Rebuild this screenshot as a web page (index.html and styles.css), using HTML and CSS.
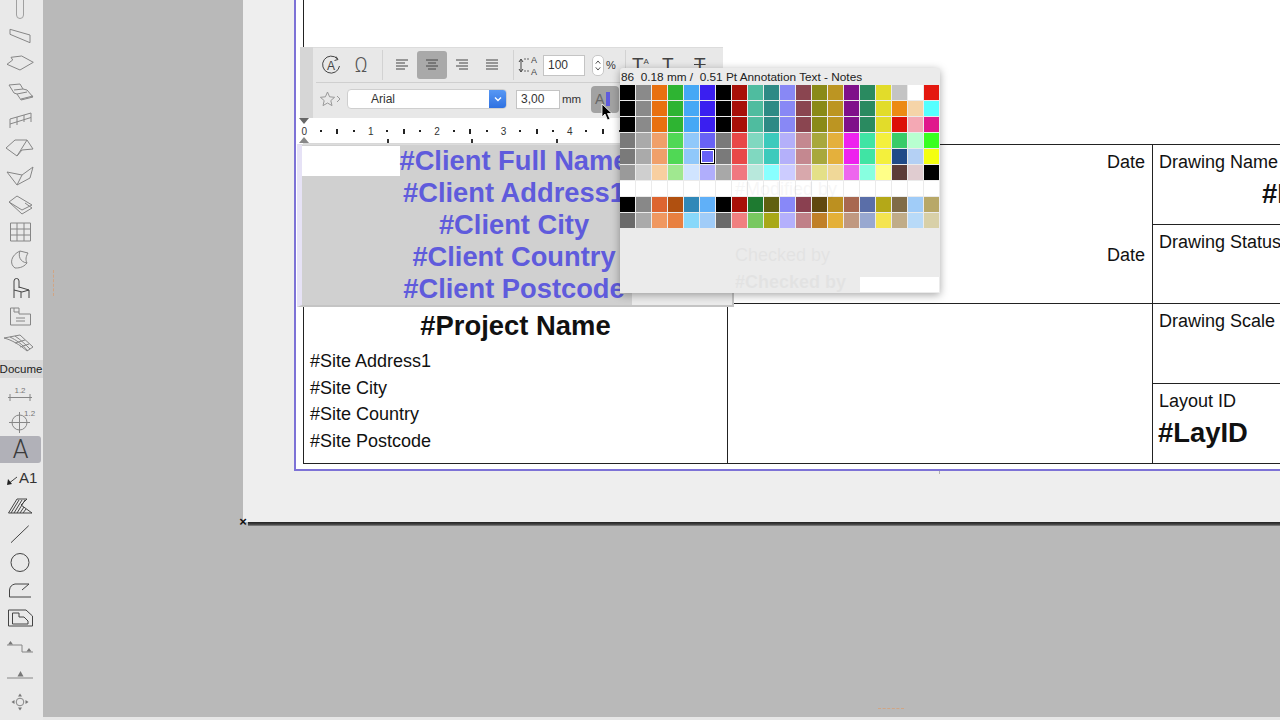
FILE: index.html
```html
<!DOCTYPE html>
<html lang="en">
<head>
<meta charset="utf-8">
<title>Title block editor</title>
<link rel="stylesheet" href="styles.css">
</head>
<body>
<div class="app">
  <aside class="tools">
    <div class="tool-group first">
      <svg class="tool" viewBox="0 0 43 28"><path class="lt" d="M16.5 0V20a3.5 3.5 0 0 0 7 0V0"/></svg>
      <svg class="tool" viewBox="0 0 43 28"><path d="M10 6.3L30 12V19.7L10 11.3Z"/></svg>
      <svg class="tool" viewBox="0 0 43 28"><path d="M7 13.3L12.7 9 11 6.3 21.7 5 33.3 11.3 20 19Z"/></svg>
      <svg class="tool" viewBox="0 0 43 28"><path d="M9 6L20 5 23 10 27 11 33 18 21 21 17 15 14 14ZM14 11L23 10M17 15L27 13M21 20L33 17"/></svg>
      <svg class="tool" viewBox="0 0 43 28"><path d="M10 21V12L31 6V15M10 17L31 10.5M17 10V18M24 8V15"/></svg>
      <svg class="tool" viewBox="0 0 43 28"><path d="M6 13L15 5H27L33 14L22 15L17 21ZM27 5L17 21"/></svg>
      <svg class="tool" viewBox="0 0 43 28"><path d="M7 9L22 12L33 4L30 15L17 22ZM22 12L17 22"/></svg>
      <svg class="tool" viewBox="0 0 43 28"><path d="M9 11L17 5 32 14 22 19ZM9 11L22 23 32 17 25 12"/></svg>
      <svg class="tool" viewBox="0 0 43 28"><path d="M10.5 4H30.5V22H10.5ZM10.5 10H30.5M10.5 16H30.5M17 4V22M24 4V22"/></svg>
      <svg class="tool" viewBox="0 0 43 28"><path d="M15 21C9 17 11 8 20 4L28 6C25 11 26 14 27 16C23 21 18 21 15 21ZM20 4C18 9 20 15 27 16"/></svg>
      <svg class="tool" viewBox="0 0 43 28"><path class="dk" d="M14 23V6a2.5 2.5 0 0 1 5 0V13M14 15L22 17 29 15 19 12M21 17V23M29 15V23"/></svg>
      <svg class="tool" viewBox="0 0 43 28"><path d="M10.5 5H19V11H30.5V22H10.5ZM14 5V9H19M16 15H25M16 18H25"/></svg>
      <svg class="tool" viewBox="0 0 43 28"><path d="M4 7L20 4 33 16 27 20C20 14 12 9 4 7ZM10 6C16 9 22 13 28 20M15 5C21 9 26 14 30 18M25 9L15 12M29 13L20 16"/></svg>
    </div>
    <div class="doc-tab">Docume</div>
    <div class="tool-group">
      <svg class="tool" viewBox="0 0 43 28"><text class="tiny" x="20" y="13" text-anchor="middle">1.2</text><path d="M8 17.5H32M10 14V21M30 14V21"/></svg>
      <svg class="tool" viewBox="0 0 43 28"><circle cx="19.5" cy="14.5" r="7.5"/><path d="M19.5 4V25M9 14.5H30"/><text class="tiny" x="24" y="8">1.2</text></svg>
      <div class="tool-active"><span class="letter-a">A</span></div>
      <svg class="tool" viewBox="0 0 43 28"><path class="dk" d="M17 13L8 20"/><path class="fill-dk" d="M7 21L8 15 12 20Z"/><text class="label-a1" x="19" y="19">A1</text></svg>
      <svg class="tool" viewBox="0 0 43 28"><path class="dk" d="M8.5 21L17 7H27L21 13L32 21ZM11 21L19 8M14 21L22 8M17 21L25 8M20 21L24 15M23 21L26 17"/></svg>
      <svg class="tool" viewBox="0 0 43 28"><path class="dk" d="M11 22.7L28.7 5.7"/></svg>
      <svg class="tool" viewBox="0 0 43 28"><circle class="dk" cx="20" cy="14.5" r="9"/></svg>
      <svg class="tool" viewBox="0 0 43 28"><path class="dk" d="M31 21H9.5V14Q10 9 15 8H29L22 14"/></svg>
      <svg class="tool" viewBox="0 0 43 28"><path class="dk" d="M8.5 6H26L32.5 12V22H8.5ZM12.5 9H19V13H24L28 17V20H12.5Z"/></svg>
      <svg class="tool" viewBox="0 0 43 28"><path d="M7 13H22V20H33"/><path class="fill-md" d="M8 12.5L10.5 9 13 12.5ZM26.5 19.5L29 16 31.5 19.5Z"/></svg>
      <svg class="tool" viewBox="0 0 43 28"><path d="M7 18H33"/><path class="fill-md" d="M17.5 16.5L20.5 11 23.5 16.5Z"/></svg>
      <svg class="tool" viewBox="0 0 43 28"><circle cx="20" cy="14" r="3.8"/><path class="fill-md" d="M18 8.5L20 5.5 22 8.5ZM18 19.5L20 22.5 22 19.5ZM14.5 12L11.5 14 14.5 16ZM25.5 12L28.5 14 25.5 16Z"/></svg>
    </div>
  </aside>

  <main class="canvas">
    <div class="sheet">
      <div class="frame">
        <div class="drawing">
          <div class="blank-top"></div>
          <div class="cell-client"></div>
          <div class="cell-dates">
            <div class="date">Date</div>
            <div class="date date-second">Date</div>
          </div>
          <div class="cell-drawing">
            <div class="sub sub-name">
              <div class="label">Drawing Name</div>
              <div class="value-name">#Layout Name</div>
            </div>
            <div class="sub">
              <div class="label">Drawing Status</div>
            </div>
          </div>
          <div class="cell-project">
            <div class="project-name">#Project Name</div>
            <div class="site-lines">
              <div>#Site Address1</div>
              <div>#Site City</div>
              <div>#Site Country</div>
              <div>#Site Postcode</div>
            </div>
          </div>
          <div class="cell-empty"></div>
          <div class="cell-layout">
            <div class="sub sub-name">
              <div class="label">Drawing Scale</div>
            </div>
            <div class="sub">
              <div class="label">Layout ID</div>
              <div class="layout-id">#LayID</div>
            </div>
          </div>
        </div>
      </div>
      <div class="frame-tick"></div>
    </div>
    <div class="sheet-edge-row">
      <span class="sheet-x">×</span>
      <div class="sheet-edge"></div>
    </div>
  </main>

  <div class="mark-v"></div>
  <div class="mark-h"></div>
  <div class="bottom-strip"></div>

  <div class="editor">
    <div class="client-text">
      <div>#Client Full Name</div>
      <div>#Client Address1</div>
      <div>#Client City</div>
      <div>#Client Country</div>
      <div>#Client Postcode</div>
    </div>
  </div>

  <div class="format-bar">
    <div class="handle"></div>
    <div class="format-body">
      <div class="bar-row row-top">
        <svg class="slot" viewBox="0 0 30 24"><path d="M21.5 6A8.5 8.5 0 1 0 23.5 13"/><path d="M20 3.5L22 6.5 18.5 7.5"/><text class="bar-a" x="11" y="17">A</text></svg>
        <span class="slot omega">Ω</span>
        <span class="divider"></span>
        <svg class="slot" viewBox="0 0 30 24"><path d="M9 7H21M9 10H18M9 13H21M9 16H18"/></svg>
        <span class="slot slot-active"><svg class="slot-in" viewBox="0 0 30 24"><path d="M9 7H21M11 10H19M9 13H21M11 16H19"/></svg></span>
        <svg class="slot" viewBox="0 0 30 24"><path d="M9 7H21M12 10H21M9 13H21M12 16H21"/></svg>
        <svg class="slot" viewBox="0 0 30 24"><path d="M9 7H21M9 10H21M9 13H21M9 16H21"/></svg>
        <span class="divider div-b"></span>
        <svg class="spacing" viewBox="0 0 22 24"><path d="M3 7V18M1 9L3 6 5 9M1 16L3 19 5 16"/><path class="dash" d="M6 6H12M6 18H12"/><text class="bar-small" x="13" y="10">A</text><text class="bar-small" x="13" y="22">A</text></svg>
        <span class="field field-pct">100</span>
        <span class="stepper"><svg viewBox="0 0 11 20"><path d="M3 8L5.5 5 8 8M3 12L5.5 15 8 12"/></svg></span>
        <span class="pct">%</span>
        <span class="divider div-c"></span>
        <span class="t-tool">T<sup>A</sup></span>
        <span class="t-tool t-mid">T<sub>A</sub></span>
        <span class="t-tool t-strike">T</span>
      </div>
      <div class="bar-row row-bottom">
        <svg class="star" viewBox="0 0 22 16"><path class="star-path" d="M7.5 1L9.6 5.8 14.6 6.3 10.8 9.6 12 14.6 7.5 12 3 14.6 4.2 9.6 .4 6.3 5.4 5.8Z"/><path class="star-path" d="M17 5L20 8 17 11"/></svg>
        <div class="font-select"><span class="font-name">Arial</span><span class="select-arrow"><svg viewBox="0 0 10 8"><path d="M2 2.5L5 5.5 8 2.5"/></svg></span></div>
        <span class="field field-size">3,00</span>
        <span class="unit">mm</span>
        <span class="color-btn"><span class="color-a">A</span><span class="color-bar"></span></span>
      </div>
    </div>
    <div class="ruler">
      <span class="mark-top"></span>
      <span class="mark-bottom"></span>
      <div class="ruler-track">
        <span class="r">0</span><span class="r"><b class="dot"></b></span><span class="r"><b class="tick"></b></span><span class="r"><b class="dot"></b></span>
        <span class="r">1</span><span class="r"><b class="dot"></b></span><span class="r"><b class="tick"></b></span><span class="r"><b class="dot"></b></span>
        <span class="r">2</span><span class="r"><b class="dot"></b></span><span class="r"><b class="tick"></b></span><span class="r"><b class="dot"></b></span>
        <span class="r">3</span><span class="r"><b class="dot"></b></span><span class="r"><b class="tick"></b></span><span class="r"><b class="dot"></b></span>
        <span class="r">4</span><span class="r"><b class="dot"></b></span><span class="r"><b class="tick"></b></span><span class="r"><b class="dot"></b></span>
      </div>
      <span class="stop stop-1"></span><span class="stop stop-2"></span><span class="stop stop-3"></span>
    </div>
  </div>

  <div class="palette">
    <div class="palette-title">86  0.18 mm /  0.51 Pt Annotation Text - Notes</div>
    <div class="swatches">
      <i style="background:#000"></i><i style="background:#8a8a8a"></i><i style="background:#e8700f"></i><i style="background:#2eb432"></i><i style="background:#45a8f5"></i><i style="background:#3a1ff0"></i><i style="background:#000"></i><i style="background:#a81008"></i><i style="background:#4fbc9f"></i><i style="background:#2e8a85"></i><i style="background:#8888f5"></i><i style="background:#8a4550"></i><i style="background:#8a8a18"></i><i style="background:#bc9522"></i><i style="background:#7f108a"></i><i style="background:#2a8a60"></i><i style="background:#e2dc2a"></i><i style="background:#c4c4c4"></i><i style="background:#fff"></i><i style="background:#e41810"></i>
      <i style="background:#000"></i><i style="background:#8a8a8a"></i><i style="background:#e8700f"></i><i style="background:#2eb432"></i><i style="background:#45a8f5"></i><i style="background:#3a1ff0"></i><i style="background:#000"></i><i style="background:#a81008"></i><i style="background:#4fbc9f"></i><i style="background:#2e8a85"></i><i style="background:#8888f5"></i><i style="background:#8a4550"></i><i style="background:#8a8a18"></i><i style="background:#bc9522"></i><i style="background:#7f108a"></i><i style="background:#2a8a60"></i><i style="background:#e2dc2a"></i><i style="background:#ec8a14"></i><i style="background:#f5d4a8"></i><i style="background:#55ffff"></i>
      <i style="background:#000"></i><i style="background:#8a8a8a"></i><i style="background:#e8700f"></i><i style="background:#2eb432"></i><i style="background:#45a8f5"></i><i style="background:#3a1ff0"></i><i style="background:#000"></i><i style="background:#a81008"></i><i style="background:#4fbc9f"></i><i style="background:#2e8a85"></i><i style="background:#8888f5"></i><i style="background:#8a4550"></i><i style="background:#8a8a18"></i><i style="background:#bc9522"></i><i style="background:#7f108a"></i><i style="background:#2a8a60"></i><i style="background:#e2dc2a"></i><i style="background:#dc1008"></i><i style="background:#f4a8b4"></i><i style="background:#e0188c"></i>
      <i style="background:#7a7a7a"></i><i style="background:#aaa"></i><i style="background:#f0a06a"></i><i style="background:#50d855"></i><i style="background:#90c8fa"></i><i style="background:#6862f5"></i><i style="background:#7a7a7a"></i><i style="background:#e84848"></i><i style="background:#80d8c0"></i><i style="background:#3ccabc"></i><i style="background:#b4b0fa"></i><i style="background:#c48890"></i><i style="background:#a8a83c"></i><i style="background:#e4b03c"></i><i style="background:#ee22ee"></i><i style="background:#40e4a4"></i><i style="background:#f4f03c"></i><i style="background:#38cc68"></i><i style="background:#b8ffd0"></i><i style="background:#38ff20"></i>
      <i style="background:#7a7a7a"></i><i style="background:#aaa"></i><i style="background:#f0a06a"></i><i style="background:#50d855"></i><i style="background:#90c8fa"></i><i class="sel" style="background:#6862f5"></i><i style="background:#7a7a7a"></i><i style="background:#e84848"></i><i style="background:#80d8c0"></i><i style="background:#3ccabc"></i><i style="background:#b4b0fa"></i><i style="background:#c48890"></i><i style="background:#a8a83c"></i><i style="background:#e4b03c"></i><i style="background:#ee22ee"></i><i style="background:#40e4a4"></i><i style="background:#f4f03c"></i><i style="background:#204a88"></i><i style="background:#b4d0f4"></i><i style="background:#f4ff10"></i>
      <i style="background:#9a9a9a"></i><i style="background:#cfcfcf"></i><i style="background:#f8cfa0"></i><i style="background:#a0e890"></i><i style="background:#d0e4ff"></i><i style="background:#b0aefc"></i><i style="background:#a8a8a8"></i><i style="background:#f07880"></i><i style="background:#b8e8dc"></i><i style="background:#88ffff"></i><i style="background:#ccccff"></i><i style="background:#d8a8ac"></i><i style="background:#e4e088"></i><i style="background:#f0d898"></i><i style="background:#ee66ee"></i><i style="background:#88ffe0"></i><i style="background:#ffff88"></i><i style="background:#5c3c38"></i><i style="background:#e0ccd0"></i><i style="background:#000"></i>
      <i class="w"></i><i class="w"></i><i class="w"></i><i class="w"></i><i class="w"></i><i class="w"></i><i class="w"></i><i class="w"></i><i class="w"></i><i class="w"></i><i class="w"></i><i class="w"></i><i class="w"></i><i class="w"></i><i class="w"></i><i class="w"></i><i class="w"></i><i class="w"></i><i class="w"></i><i class="w"></i>
      <i style="background:#000"></i><i style="background:#888"></i><i style="background:#dd6530"></i><i style="background:#b05010"></i><i style="background:#3088b8"></i><i style="background:#60b0f8"></i><i style="background:#000"></i><i style="background:#a81008"></i><i style="background:#1e7a30"></i><i style="background:#606010"></i><i style="background:#8888f8"></i><i style="background:#8a4050"></i><i style="background:#604810"></i><i style="background:#bc9020"></i><i style="background:#a86850"></i><i style="background:#5a6ea8"></i><i style="background:#b4a818"></i><i style="background:#806c48"></i><i style="background:#a0ccf8"></i><i style="background:#b8a868"></i>
      <i style="background:#6a6a6a"></i><i style="background:#aaa"></i><i style="background:#f09860"></i><i style="background:#e88040"></i><i style="background:#88d8fa"></i><i style="background:#a0ccf8"></i><i style="background:#6a6a6a"></i><i style="background:#f08080"></i><i style="background:#78c860"></i><i style="background:#a8a818"></i><i style="background:#b4b0fc"></i><i style="background:#c08088"></i><i style="background:#c08028"></i><i style="background:#e4b038"></i><i style="background:#c09880"></i><i style="background:#98a8d0"></i><i style="background:#f4e450"></i><i style="background:#c0ac88"></i><i style="background:#b8daf8"></i><i style="background:#d8d0a8"></i>
      <i class="w tail"></i>
    </div>
    <span class="ghost ghost-1">#Modified by</span>
    <span class="ghost ghost-2">Checked by</span>
    <span class="ghost ghost-3">#Checked by</span>
  </div>

  <svg class="cursor" viewBox="0 0 12 18"><path d="M1 1V14L4 11 6.5 17 9 16 6.5 10.5H11Z"/></svg>
</div>
</body>
</html>
```
FILE: styles.css
```css
* { box-sizing: border-box; }
html, body { margin: 0; padding: 0; }
body { font-family: "Liberation Sans", Arial, sans-serif; color: #111; }

.app {
  position: relative;
  display: flex;
  width: 1280px;
  height: 720px;
  overflow: hidden;
  background: #b9b9b9;
}

/* Left tool palette */
.tools {
  flex: 0 0 43px;
  height: 720px;
  background: #e9e9e9;
  overflow: hidden;
  position: relative;
  z-index: 2;
}
.tool-group { display: flex; flex-direction: column; }
.tool-group.first { margin-top: -5px; }
.tool { display: block; flex: 0 0 28px; width: 43px; height: 28px; }
.tool path, .tool circle { fill: none; stroke: #868686; stroke-width: 1; }
.tool path.lt { stroke: #a0a0a0; }
.tool path.dk, .tool circle.dk { stroke: #444; }
.tool path.fill-dk { fill: #222; stroke: none; }
.tool path.fill-md { fill: #777; stroke: none; }
.tiny { font: 8px "Liberation Sans", sans-serif; fill: #777; }
.label-a1 { font: 15px "Liberation Sans", sans-serif; fill: #333; }
.doc-tab {
  height: 18px;
  margin: 1px 0 2px -2px;
  width: 46px;
  background: #d9d9d9;
  font-size: 11.5px;
  line-height: 18px;
  text-align: center;
  white-space: nowrap;
  overflow: hidden;
  color: #222;
}
.tool-active {
  height: 27px;
  width: 41px;
  background: #b1b1b8;
  border-radius: 0 3px 3px 0;
  margin-bottom: 1px;
  text-align: center;
}
.letter-a { font: 300 25px/27px Roboto, sans-serif; color: #3a3a3a; }

/* Canvas and sheet */
.canvas { flex: 1; padding-left: 200px; min-width: 0; }
.sheet {
  position: relative;
  height: 522px;
  padding-left: 51px;
  background: #eeeeee;
}
.frame {
  height: 471px;
  padding-left: 7px;
  background: #fff;
  border-left: 2px solid #7d72d6;
  border-bottom: 2px solid #7d72d6;
}
.frame-tick {
  position: absolute;
  left: 696px;
  top: 471px;
  width: 1px;
  height: 3px;
  background: #b0b0b0;
}
.drawing {
  display: grid;
  grid-template-columns: 423px 425px 200px;
  grid-template-rows: 144px 159px 160px;
  width: 1049px;
  height: 464px;
  border-left: 1px solid #222;
  border-bottom: 1px solid #222;
  font-size: 18px;
  line-height: 20px;
}
.blank-top { grid-column: 1 / 4; }
.cell-dates {
  border-top: 1px solid #222;
  padding: 7px 7px 0 0;
  text-align: right;
}
.date-second { margin-top: 73px; }
.cell-client { border-top: 1px solid #222; }
.cell-drawing, .cell-layout {
  display: flex;
  flex-direction: column;
  border-left: 1px solid #222;
  border-top: 1px solid #222;
  padding-left: 6px;
  position: relative;
}
.sub { flex: 1; padding-top: 7px; margin-left: -6px; padding-left: 6px; white-space: nowrap; }
.sub-name { border-bottom: 1px solid #222; flex: 0 0 80px; }
.value-name {
  margin: 7px 0 0 103px;
  font-size: 27.4px;
  font-weight: 700;
  line-height: 30px;
}
.cell-project {
  border-top: 1px solid #222;
  padding-top: 7px;
}
.project-name {
  text-align: center;
  font-size: 27.4px;
  font-weight: 700;
  line-height: 30px;
}
.site-lines { margin-top: 7px; padding-left: 6px; line-height: 26.67px; }
.cell-empty { border-top: 1px solid #222; border-left: 1px solid #222; }
.layout-id {
  margin: 7px 0 0 -1px;
  font-size: 27.4px;
  font-weight: 700;
  line-height: 30px;
}
.sheet-edge-row { position: relative; height: 5px; padding-left: 5px; }
.sheet-edge {
  height: 4px;
  background: linear-gradient(#222, #444 60%, #8a8a8a);
}
.sheet-x {
  position: absolute;
  left: -6px;
  top: -7px;
  width: 12px;
  font-size: 13px;
  line-height: 14px;
  font-weight: 700;
  text-align: center;
  color: #111;
}

/* Faint markers */
.mark-v {
  position: absolute;
  left: 53px;
  top: 270px;
  height: 26px;
  border-left: 1px dashed #d0a585;
}
.mark-h {
  position: absolute;
  left: 878px;
  top: 708px;
  width: 26px;
  border-top: 1px dashed #d0a585;
}
.bottom-strip {
  position: absolute;
  left: 0;
  right: 0;
  bottom: 0;
  height: 3px;
  background: #e6e6e6;
}

/* Text editor box */
.editor {
  position: absolute;
  left: 297px;
  top: 144px;
  width: 437px;
  height: 163px;
  padding: 0;
  background: linear-gradient(to right, #d0d0d0 330px, #ebebeb 330px);
  border: 1px solid #dcdcdc;
  border-bottom: 2px solid #c4c4c4;
  border-right: 2px solid #c4c4c4;
  border-left: 5px solid #e6e2f6;
}
.editor::before {
  content: "";
  position: absolute;
  left: 0;
  top: 1px;
  width: 98px;
  height: 30px;
  background: #fff;
}
.client-text {
  position: relative;
  width: 424px;
  color: #5f5bdc;
  font-size: 27.3px;
  font-weight: 700;
  line-height: 32px;
  text-align: center;
  white-space: nowrap;
}

/* Format bar */
.format-bar {
  position: absolute;
  left: 300px;
  top: 47px;
  width: 423px;
  height: 97px;
  display: grid;
  grid-template-columns: 13px 410px;
  grid-template-rows: 71px 26px;
}
.handle { background: #d6d6d6; }
.format-body { background: #e8e8e8; border-top: 1px solid #dcdcdc; min-width: 0; overflow: hidden; }
.bar-row { display: flex; align-items: center; font-size: 11px; color: #222; }
.row-top { height: 35px; margin: 0 0 0 3px; border-bottom: 1px solid #cfcfcf; }
.row-bottom { height: 35px; padding: 0 0 3px 7px; }
.slot { flex: 0 0 30px; width: 30px; height: 24px; display: block; }
.slot path, .slot-in path, .spacing path { fill: none; stroke: #444; stroke-width: 1; }
.spacing path.dash { stroke-dasharray: 2 1; stroke: #666; }
.slot-active {
  height: 28px;
  background: #a9a9a9;
  border-radius: 3px;
  display: flex;
  align-items: center;
  justify-content: center;
}
.slot-in { width: 30px; height: 24px; display: block; }
.omega { font: 300 20px/24px Roboto, sans-serif; text-align: center; color: #555; }
.bar-a { font: 12px "Liberation Sans", sans-serif; fill: #444; }
.bar-small { font: 9px "Liberation Sans", sans-serif; fill: #444; }
.divider { flex: 0 0 1px; width: 1px; height: 30px; margin: 0 4px 0 6px; background: #d2d2d2; }
.div-b { margin: 0 4px 0 6px; }
.spacing { flex: 0 0 22px; width: 22px; height: 24px; }
.field {
  height: 21px;
  background: #fff;
  border: 1px solid #c4c4c4;
  padding-left: 4px;
  line-height: 19px;
  font-size: 12px;
  color: #333;
}
.field-pct { flex: 0 0 42px; margin-left: 3px; }
.stepper {
  flex: 0 0 12px;
  height: 21px;
  margin-left: 7px;
  background: #fff;
  border: 1px solid #c8c8c8;
  border-radius: 5px;
}
.stepper svg { display: block; width: 10px; height: 19px; }
.stepper path { fill: none; stroke: #444; stroke-width: 1; }
.pct { flex: 0 0 12px; margin-left: 2px; font-size: 11px; color: #333; }
.div-c { margin: 0 6px 0 7px; }
.t-tool { flex: 0 0 30px; font-size: 19px; color: #444; line-height: 20px; }
.t-mid { flex-basis: 32px; }
.t-tool sup, .t-tool sub { font-size: 8px; line-height: 0; }
.t-strike { text-decoration: line-through; }
.star { flex: 0 0 22px; width: 22px; height: 16px; }
.star-path { fill: none; stroke: #999; stroke-width: 1; }
.font-select {
  display: flex;
  align-items: center;
  justify-content: space-between;
  width: 160px;
  height: 20px;
  margin-left: 5px;
  background: #fff;
  border: 1px solid #cfcfcf;
  border-radius: 4px;
  overflow: hidden;
}
.font-name { margin-left: 23px; font-size: 12px; color: #333; }
.select-arrow {
  width: 17px;
  height: 20px;
  background: linear-gradient(#5a9af5, #2c6fe0);
  display: flex;
  align-items: center;
  justify-content: center;
}
.select-arrow svg { width: 10px; height: 8px; }
.select-arrow path { fill: none; stroke: #fff; stroke-width: 1.4; }
.field-size { flex: 0 0 44px; margin-left: 9px; height: 19px; line-height: 17px; }
.unit { margin-left: 2px; width: 29px; font-size: 11.5px; color: #333; white-space: nowrap; }
.color-btn {
  flex: 0 0 28px;
  height: 27px;
  display: flex;
  align-items: center;
  gap: 2px;
  padding-left: 4px;
  background: #a2a2a2;
  border-radius: 4px;
}
.color-a { font-size: 14px; color: #666; }
.color-bar { width: 4px; height: 14px; background: #5f5bdc; }

/* Ruler */
.ruler {
  grid-column: 1 / 3;
  position: relative;
  margin-left: 3px;
  background: #fff;
  border-bottom: 1px solid #d8d8d8;
}
.ruler-track {
  display: flex;
  height: 25px;
  margin-left: -7px;
  width: 330px;
  overflow: hidden;
  align-items: center;
  padding-top: 1px;
}
.r {
  flex: 0 0 16.6px;
  display: flex;
  justify-content: center;
  align-items: center;
  font-size: 10px;
  color: #333;
}
.dot { width: 2px; height: 2px; background: #222; }
.tick { width: 2px; height: 5px; background: #222; }
.mark-top, .mark-bottom {
  position: absolute;
  left: -4px;
  width: 0;
  height: 0;
  border-left: 5px solid transparent;
  border-right: 5px solid transparent;
}
.mark-top { top: 0; border-top: 6px solid #666; }
.mark-bottom { bottom: 0; border-bottom: 6px solid #888; }
.stop { position: absolute; bottom: 0; width: 2px; height: 4px; background: #333; }
.stop-1 { left: 84px; }
.stop-2 { left: 168px; }
.stop-3 { left: 253px; }

/* Colour palette */
.palette {
  position: absolute;
  left: 620px;
  top: 68px;
  width: 320px;
  height: 225px;
  background: #ebebeb;
  box-shadow: 0 2px 8px rgba(0, 0, 0, .35);
  border-radius: 3px 3px 0 0;
}
.palette-title {
  height: 17px;
  padding-left: 1px;
  font-size: 11.8px;
  line-height: 18px;
  white-space: pre;
  color: #222;
}
.swatches {
  display: grid;
  grid-template-columns: repeat(20, 15px);
  grid-auto-rows: 15px;
  gap: 1px;
}
.swatches i { display: block; }
.swatches .w { background: #fff; }
.swatches .tail { grid-column: 16 / span 5; grid-row: 13; }
.swatches .sel { box-shadow: inset 0 0 0 1px #000, inset 0 0 0 2px #fff; }
.ghost {
  position: absolute;
  left: 115px;
  font-size: 18px;
  line-height: 20px;
  color: #000;
  opacity: .03;
  white-space: nowrap;
}
.ghost-1 { top: 111px; }
.ghost-2 { top: 177px; }
.ghost-3 { top: 204px; font-weight: 700; }

.cursor {
  position: absolute;
  left: 601px;
  top: 103px;
  width: 12px;
  height: 18px;
}
.cursor path { fill: #000; stroke: #fff; stroke-width: .8; }
```
